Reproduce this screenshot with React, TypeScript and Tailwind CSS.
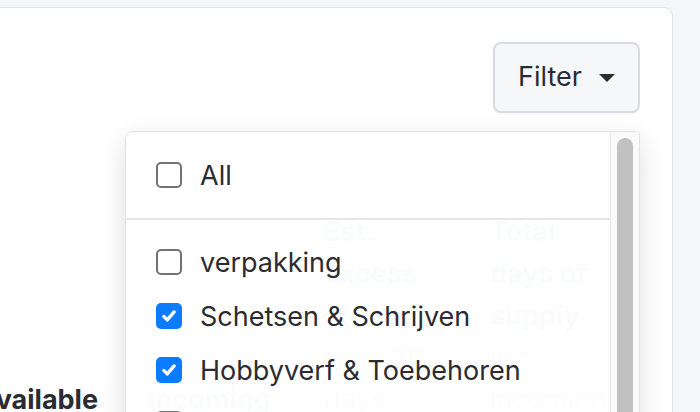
const items = [
  { label: "verpakking", checked: false },
  { label: "Schetsen & Schrijven", checked: true },
  { label: "Hobbyverf & Toebehoren", checked: true },
  { label: "Papier & Karton", checked: false },
  { label: "Kwasten", checked: false },
];

function Box({ checked }: { checked: boolean }) {
  if (checked) {
    return (
      <span className="flex size-[26px] shrink-0 items-center justify-center rounded-[5px] bg-[#0b7cff]">
        <svg viewBox="0 0 16 16" className="size-[18px]" fill="none" stroke="white" strokeWidth={3} strokeLinecap="round" strokeLinejoin="round">
          <path d="M3.4 8.4l3 3.1L12.6 4.4" />
        </svg>
      </span>
    );
  }
  return <span className="size-[26px] shrink-0 rounded-[5px] border-2 border-[#737373] bg-white" />;
}

function Row({ label, checked }: { label: string; checked: boolean }) {
  return (
    <div className="flex h-[54px] items-center gap-[18px] pl-[30px]">
      <Box checked={checked} />
      <span className="text-[27px] leading-none text-[#2b2b31]">{label}</span>
    </div>
  );
}

export default function App() {
  return (
    <div className="h-[412px] overflow-hidden bg-[#f5f6f8] font-['Inter',sans-serif]">
      <div className="-ml-[40px] pt-[7px] pr-[27px]">
        <div className="h-[520px] rounded-[9px] border border-[#e3e4e9] bg-white pt-[34px] pr-[32px] pl-[39px] shadow-[0_1px_3px_rgba(0,0,0,0.04)]">
          <div className="flex justify-end">
            <div className="relative z-10">
              <button className="flex h-[71px] items-center gap-[17px] rounded-[8px] border-2 border-[#d8dbe2] bg-[#f6f7f9] px-[23px] text-[27px] text-[#2a2b33] shadow-[0_1px_2px_rgba(0,0,0,0.05)]">
                Filter
                <svg viewBox="0 0 16 8" className="h-[8px] w-[16px]" fill="#2a2b33">
                  <path d="M0 0h16L8 8z" />
                </svg>
              </button>

              {/* dropdown menu */}
              <div className="absolute top-[calc(100%+18px)] right-0 flex h-[330px] w-[515px] overflow-hidden rounded-tl-[8px] rounded-tr-[4px] border border-[#e2e2e4] bg-white/[0.98] shadow-[0_8px_26px_rgba(0,0,0,0.13)]">
                <div className="flex-1">
                  <div className="border-b-2 border-[#e6e6e8] pt-[16px] pb-[16px]">
                    <Row label="All" checked={false} />
                  </div>
                  <div className="pt-[15px]">
                    {items.map((it) => (
                      <Row key={it.label} label={it.label} checked={it.checked} />
                    ))}
                  </div>
                </div>
                <div className="w-[29px] border-l border-[#e8e8ea] bg-[#fafafa] px-[6px] pt-[6px]">
                  <div className="h-[400px] rounded-full bg-[#c1c1c1]" />
                </div>
              </div>
            </div>
          </div>

          <div className="mt-[98px] flex items-end text-[27px] leading-[42px] text-[#2a2b33]">
            <div className="flex w-[148px] shrink-0 justify-end pr-[50px]">
              <span className="font-bold whitespace-nowrap">Available</span>
            </div>
            <div className="w-[176px] shrink-0 font-bold">Incoming</div>
            <div className="w-[166px] shrink-0">
              <div className="w-[130px] font-bold">Est. excess stock</div>
              <div className="w-[130px] text-[#8a8d96]">Next 30 days</div>
            </div>
            <div className="w-[150px] shrink-0">
              <div className="w-[130px] font-bold">Total days of supply</div>
              <div className="w-[130px] text-[#8a8d96]">incl. incoming</div>
            </div>
          </div>
        </div>
      </div>
    </div>
  );
}
